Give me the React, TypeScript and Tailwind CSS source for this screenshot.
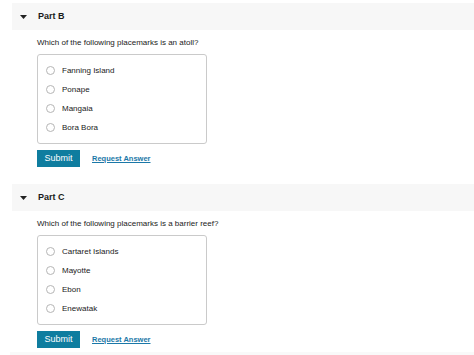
import React from "react";

interface Part {
  label: string;
  question: string;
  options: string[];
}

const parts: Part[] = [
  {
    label: "Part B",
    question: "Which of the following placemarks is an atoll?",
    options: ["Fanning Island", "Ponape", "Mangaia", "Bora Bora"],
  },
  {
    label: "Part C",
    question: "Which of the following placemarks is a barrier reef?",
    options: ["Cartaret Islands", "Mayotte", "Ebon", "Enewatak"],
  },
];

function PartSection({ part, first }: { part: Part; first: boolean }) {
  return (
    <section className={first ? "pt-[3px]" : "pt-[17px]"}>
      <header className="ml-[12px] h-[27px] bg-[#f7f7f7] flex items-center">
        <svg width="7" height="4" viewBox="0 0 7 4" className="ml-[8px] mt-[1px]">
          <path d="M0 0 L7 0 L3.5 4 Z" fill="#222" />
        </svg>
        <h2 className="ml-[11px] text-[9px] leading-none font-bold text-[#1a1a1a]">{part.label}</h2>
      </header>
      <div className="pl-[37px]">
        <p className="mt-[8px] text-[8px] leading-[10px] text-[#222]">{part.question}</p>
        <div className="mt-[6px] w-[170px] border border-[#cacaca] rounded-[3px] pt-[6px] pb-[6px] pl-[8px]">
          {part.options.map((o) => (
            <label key={o} className="flex items-center h-[19px]">
              <span className="w-[9px] h-[9px] rounded-full border border-[#b5b5b5] bg-white" />
              <span className="ml-[7px] text-[8px] leading-none text-[#222]">{o}</span>
            </label>
          ))}
        </div>
        <div className="mt-[6px] flex items-center">
          <button className="w-[43px] h-[17px] bg-[#0f7d9f] text-white text-[9px] leading-none flex items-center justify-center">
            Submit
          </button>
          <a href="#" className="ml-[12px] text-[7.5px] leading-none font-bold text-[#1b78a8] underline">
            Request Answer
          </a>
        </div>
      </div>
    </section>
  );
}

export default function App() {
  return (
    <div className="w-[474px] h-[355px] bg-white overflow-hidden" style={{ fontFamily: '"Liberation Sans", Arial, sans-serif' }}>
      {parts.map((p, i) => (
        <PartSection key={p.label} part={p} first={i === 0} />
      ))}
      <div className="ml-[10px] mt-[4px] h-[20px] bg-[#f9f9f9]" />
    </div>
  );
}
